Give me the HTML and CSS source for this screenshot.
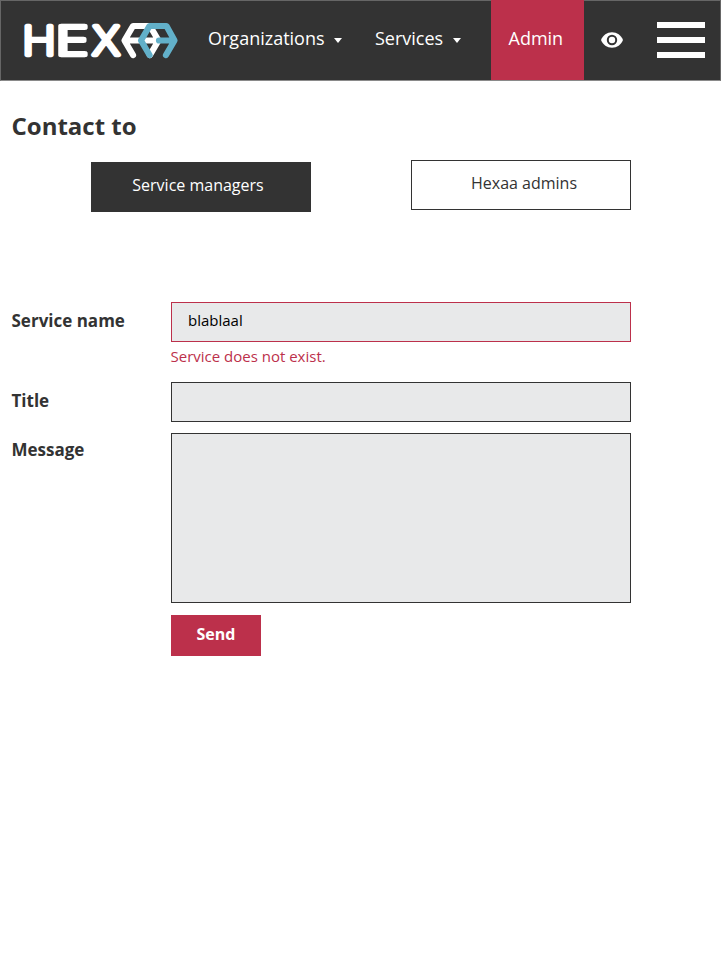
FILE: index.html
```html
<!DOCTYPE html>
<html lang="en">
<head>
<meta charset="utf-8">
<title>Contact</title>
<link rel="stylesheet" href="styles.css">
</head>
<body>
<header class="bar">
  <a class="logo" aria-label="Home">
    <svg width="160" height="79" viewBox="-1 -19 160 79">
      <g class="wordmark">
        <text transform="translate(-.8 35.200) scale(1.14 1)">H</text>
        <text transform="translate(32.400 35.200) scale(1.44 1)">E</text>
        <text transform="translate(70.600 35.200) scale(1.14 1)">X</text>
      </g>
      <g class="emblem">
        <path class="light" d="M110 35L101.500 20.500L110 6H127L135.500 20.500L127 35M104 20.500H133"/>
        <path class="blue" d="M126.500 35L118 20.500L126.500 6H143.500L151.500 20.500L143 35M136 20.500H150"/>
      </g>
    </svg>
  </a>
  <nav class="nav">
    <a class="organizations">Organizations <i class="caret"></i></a>
    <a class="services">Services <i class="caret"></i></a>
    <a class="admin">Admin</a>
  </nav>
  <svg class="eye" width="22" height="16" viewBox="0 0 22 16">
    <path d="M0 8C2 3.200 6 .3 11 .3S20 3.200 22 8C20 12.800 16 15.700 11 15.700S2 12.800 0 8Z" fill="#fff"/>
    <circle cx="11" cy="8" r="4.200" fill="#fff" stroke="#333" stroke-width="2"/>
  </svg>
  <div class="burger"><i></i><i></i><i></i></div>
</header>
<main>
  <h1>Contact to</h1>
  <div class="choices">
    <button class="choice selected">Service managers</button>
    <button class="choice">Hexaa admins</button>
  </div>
  <form>
    <div class="row service">
      <label for="service">Service name</label>
      <div>
        <input id="service" class="field invalid" value="blablaal">
        <p class="error">Service does not exist.</p>
      </div>
    </div>
    <div class="row title">
      <label for="title">Title</label>
      <input id="title" class="field">
    </div>
    <div class="row message">
      <label for="message">Message</label>
      <textarea id="message" class="field"></textarea>
    </div>
    <button class="send" type="button">Send</button>
  </form>
</main>
</body>
</html>
```
FILE: styles.css
```css
* { box-sizing: border-box; }
body { margin: 0; background: #fff; color: #333; font-family: "Open Sans", sans-serif; height: 961px; overflow: hidden; }
.bar { display: flex; height: 81px; width: 721px; background: #333; border: 1px solid #666; border-bottom-color: #8a8a8a; color: #fff; }
.logo { width: 157px; margin: 0 0 0 21px; }
.logo svg { display: block; }
.wordmark text { font: 300 41px "Open Sans", sans-serif; fill: #fff; stroke: #fff; stroke-width: 4.4px; stroke-linejoin: round; }
.emblem path { fill: none; stroke-width: 6.2px; stroke-linecap: round; stroke-linejoin: round; }
.emblem .light { stroke: #fff; }
.emblem .blue { stroke: #62b0c9; }
.nav { display: flex; height: 80px; font-size: 18px; font-weight: 400; line-height: 75px; }
.nav a { display: flex; }
.organizations { width: 167px; padding-left: 29px; }
.services { width: 145px; padding-left: 29px; }
.caret { width: 0; height: 0; margin: 37px 0 0 9.5px; border: 4.500px solid transparent; border-top: 5px solid #fff; border-bottom: 0; }
.admin { width: 93px; height: 80px; margin-top: -1px; padding: 1px 0 0 17.5px; background: #bc304b; }
.eye { margin: 31px 0 0 17px; }
.burger { display: grid; grid-template-rows: repeat(3, 6px); gap: 9px; width: 48px; height: 36px; margin: 21px 0 0 34px; }
.burger i { background: #fff; }
main { padding: 0 11px; }
h1 { margin: 27px 0 0 .5px; font-size: 24px; line-height: 36px; font-weight: 700; }
.choices { display: flex; gap: 100px; margin: 16px 0 0 80px; }
.choice { width: 220px; height: 50px; padding: 0 0 5px 6px; border: 1px solid #333; background: #fff; color: #333; font: 400 16px "Open Sans", sans-serif; }
.selected { margin-top: 2px; padding: 0 6px 5px 0; background: #333; color: #fff; }
form { margin-top: 90px; }
.row { display: grid; grid-template-columns: 160px 460px; align-items: start; }
label { padding-left: .5px; font-size: 17px; font-weight: 700; line-height: 38px; }
.field { display: block; width: 460px; height: 40px; margin: 0; padding: 0 16px 4px; border: 1px solid #333; border-radius: 0; background: #e8e9ea; color: #000; font: 400 15px "Open Sans", sans-serif; resize: none; outline: 0; }
.invalid { border-color: #bc304b; }
.error { margin: 3px 0 0 -.5px; color: #bc304b; font-size: 15px; line-height: 22px; }
.service { height: 80px; }
.title { height: 51px; }
.message { height: 182px; }
.message label { line-height: 34px; }
textarea.field { height: 170px; }
.send { display: block; width: 90px; height: 41px; margin-left: 160px; padding: 0 0 3px; border: 0; background: #bc304b; color: #fff; font: 700 16px "Open Sans", sans-serif; }
```
